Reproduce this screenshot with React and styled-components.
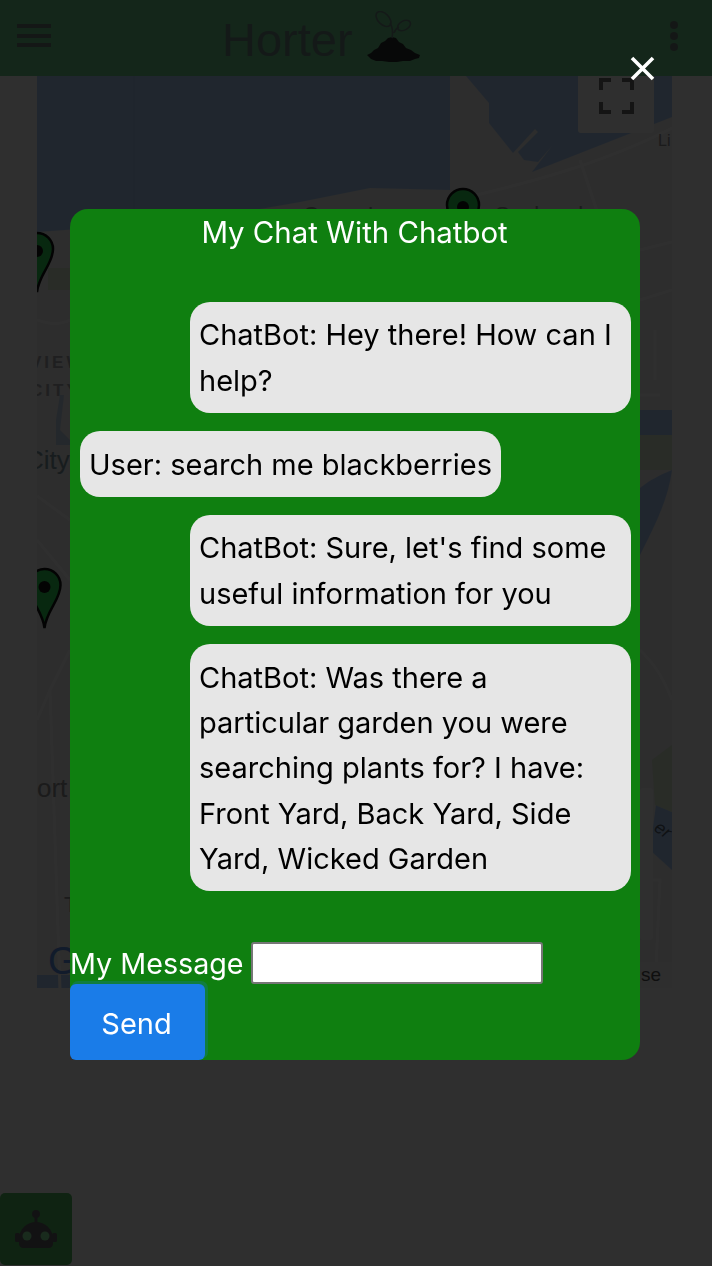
import React from 'react'
import styled, { createGlobalStyle } from 'styled-components'

const GlobalStyle = createGlobalStyle`
  html, body { margin: 0; padding: 0; background: #fff; }
  body { font-family: Inter, "Liberation Sans", sans-serif; overflow: hidden; }
  * { box-sizing: border-box; }
`

const Page = styled.div`
  width: 712px;
  height: 1266px;
  display: flex;
  flex-direction: column;
  overflow: hidden;
`

const Header = styled.header`
  height: 76px;
  flex: none;
  background: #6dce8d;
  display: flex;
  align-items: flex-start;
  padding: 0 34px 0 17px;
  position: relative;
  z-index: 1;
`

const MenuButton = styled.div`
  width: 34px;
  margin-top: 24px;
  display: flex;
  flex-direction: column;
  gap: 5.5px;
`

const MenuBar = styled.span`
  height: 4px;
  background: #6d7f78;
`

const Brand = styled.div`
  margin-left: 171px;
  display: flex;
  align-items: flex-start;
  gap: 12px;
`

const BrandName = styled.span`
  font-family: "Liberation Sans", Arial, sans-serif;
  font-size: 47px;
  line-height: 54px;
  margin-top: 13px;
  color: #6d8882;
`

const MoreButton = styled.div`
  margin-left: auto;
  margin-top: 21px;
  display: flex;
  flex-direction: column;
  gap: 3px;
`

const MoreDot = styled.span`
  width: 8px;
  height: 8px;
  border-radius: 50%;
  background: #6d7f78;
`

const MapFrame = styled.div`
  position: relative;
  width: 635px;
  height: 912px;
  margin-left: 37px;
  flex: none;
  overflow: hidden;
  background: #f0f0f0;
`

const MapDrawing = styled.svg`
  display: block;
  width: 635px;
  height: 912px;
`

const FullscreenButton = styled.div`
  position: absolute;
  top: 0;
  right: 18px;
  width: 76px;
  height: 57px;
  border-radius: 0 0 3px 3px;
  background: #fff;
`

const ChatToggle = styled.div`
  margin-top: auto;
  margin-bottom: 1px;
  width: 72px;
  height: 72px;
  background: #52be62;
  border-radius: 5px;
  display: flex;
  align-items: center;
  justify-content: center;
`

const Overlay = styled.div`
  position: fixed;
  inset: 0;
  z-index: 10;
  background: rgba(0, 0, 0, 0.816);
  padding: 209px 0 0 70px;
`

const CloseButton = styled.svg`
  position: absolute;
  top: 56px;
  left: 629px;
  width: 27px;
  height: 25px;
`

const Modal = styled.div`
  width: 570px;
  height: 851px;
  background: #0f7f10;
  border-radius: 18px;
  display: flex;
  flex-direction: column;
  color: #fff;
`

const Title = styled.div`
  font-size: 29.4px;
  line-height: 47px;
  text-align: center;
  padding-right: 1px;
`

const ChatLog = styled.div`
  margin-top: 46px;
  padding: 0 9px 0 10px;
  display: flex;
  flex-direction: column;
  gap: 18.4px;
`

const Bubble = styled.div`
  align-self: ${p => (p.$fromUser ? 'flex-start' : 'flex-end')};
  max-width: 441px;
  padding: 10.4px 9px 9.6px;
  background: #e6e6e6;
  border-radius: 20px;
  color: #000;
  font-size: 29px;
  line-height: 45.4px;
`

const MessageForm = styled.form`
  margin-top: auto;
  display: flex;
  flex-direction: column;
  align-items: flex-start;
`

const MessageRow = styled.label`
  display: flex;
  align-items: center;
  gap: 7.5px;
  height: 42px;
  font-size: 28.7px;
`

const MessageInput = styled.input`
  width: 292px;
  height: 42px;
  background: #fff;
  border: 2px solid #767676;
  border-radius: 3px;
  padding: 0 4px;
`

const SendButton = styled.button`
  width: 135px;
  height: 76px;
  border: 0;
  border-radius: 6px;
  padding: 2px 2px 0 0;
  background: #1a7ce8;
  box-shadow: 2px -2px 0 1px rgba(26, 124, 232, 0.22);
  color: #fff;
  font-family: inherit;
  font-size: 29px;
`

const messages = [
  { id: 1, text: 'ChatBot: Hey there! How can I help?' },
  { id: 2, text: 'User: search me blackberries', fromUser: true },
  { id: 3, text: "ChatBot: Sure, let's find some useful information for you" },
  { id: 4, text: 'ChatBot: Was there a particular garden you were searching plants for? I have: Front Yard, Back Yard, Side Yard, Wicked Garden' },
]

function SproutLogo() {
  return (
    <svg width="58" height="56" viewBox="0 0 58 56" style={{ marginTop: 11 }}>
      <path d="M2 44 L6 42 L9 39 L13 37 L16 32 L20 30 L23 27 L27 26 L31 27 L34 31 L38 33 L41 37 L46 39 L50 42 L55 44 L54 47 L50 48 L45 50 L38 50 L32 51 L24 51 L17 50 L11 50 L6 48Z" fill="#2a2e2e" />
      <path d="M27 27 C28 22 28 17 25 12 M29 22 C30 19 32 17 34 16" fill="none" stroke="#6d8882" strokeWidth="1.6" />
      <ellipse cx="18.5" cy="8" rx="9" ry="5.5" transform="rotate(45 18.5 8)" fill="none" stroke="#6d8882" strokeWidth="1.6" />
      <ellipse cx="39" cy="14.5" rx="7" ry="4.5" transform="rotate(-30 39 14.5)" fill="none" stroke="#6d8882" strokeWidth="1.6" />
    </svg>
  )
}

function Pin({ x, y }) {
  return (
    <g transform={`translate(${x} ${y})`}>
      <path d="M0 60 C-2 42 -16 32 -16 17 A16 16 0 0 1 16 17 C16 32 2 42 0 60Z" fill="#2bd858" stroke="#111" strokeWidth="2.5" />
      <circle cx="0" cy="19" r="6" fill="#111" />
    </g>
  )
}

function MapPicture() {
  const labelFont = '"Liberation Sans", Arial, sans-serif'
  return (
    <MapDrawing viewBox="37 76 635 912">
      {/* water */}
      <path d="M37 76 H450 V190 L370 188 L300 202 L230 214 L120 226 L37 232Z" fill="#aecffa" />
      <path d="M466 76 H672 V117 L532 172 L552 146 L538 162 L524 160 L518 152 L538 132 L535 129 L513 153 L489 123 V103Z" fill="#aecffa" />
      <path d="M640 410 H672 V435 H640Z M640 488 C650 480 660 475 672 470 C668 500 655 525 640 555Z" fill="#aecffa" />
      <path d="M656 805 L672 812 V870 L650 850Z" fill="#aecffa" />
      <path d="M56 420 L60 395 L64 395 L60 430 L70 440 V445 L56 445Z" fill="#c4d6ee" />
      <path d="M37 975 H70 V988 H37Z" fill="#aecffa" />
      {/* parks */}
      <path d="M640 435 H672 V470 H640Z M652 760 L672 745 V812 L655 805Z" fill="#dcebd0" />
      <rect x="48" y="268" width="22" height="22" fill="#dcebd0" />
      {/* roads */}
      <path d="M134 76 V226" fill="none" stroke="#a6c6f0" strokeWidth="1.5" />
      <g fill="none" stroke="#fff" strokeWidth="3">
        <path d="M455 200 C520 185 600 165 672 128" />
        <path d="M37 320 C50 325 60 325 70 320 M37 496 L70 520 M37 540 L70 580 M37 720 L50 690 L70 650 M50 690 L60 990 M640 650 C650 660 660 670 672 700" />
        <path d="M640 250 L672 242 M640 300 L672 290 M655 330 L655 380 M640 395 H660 M580 160 L600 220 M640 880 L660 880 L655 990" />
      </g>
      {/* labels */}
      <g fontFamily={labelFont} fill="#909095">
        <text x="303" y="222" fontSize="22">Camp Leroy</text>
        <text x="495" y="222" fontSize="22">Seabrook</text>
        <text x="658" y="146" fontSize="16">Li</text>
        <text x="30" y="368" fontSize="17" fontWeight="700" letterSpacing="3" fill="#a8a8ac">VIEW</text>
        <text x="30" y="396" fontSize="17" fontWeight="700" letterSpacing="3" fill="#a8a8ac">CITY</text>
        <text x="25" y="469" fontSize="26" fill="#7f9aa0">City</text>
        <text x="37" y="797" fontSize="26">ort</text>
        <text x="64" y="912" fontSize="22">T</text>
      </g>
      <text x="653" y="830" fontSize="18" fontStyle="italic" fontFamily={labelFont} fill="#55606e" transform="rotate(35 653 830)">er</text>
      <text x="48" y="974" fontSize="38" fontFamily={labelFont} fill="#5f90e8">G</text>
      {/* controls */}
      <rect x="640" y="788" width="13" height="152" rx="3" fill="#fff" />
      <rect x="640" y="962" width="32" height="26" fill="#f6f6f6" />
      <text x="641" y="981" fontSize="19" fontFamily={labelFont} fill="#555">se</text>
      <Pin x={463} y={188} />
      <Pin x={37} y={232} />
      <Pin x={44.5} y={568} />
    </MapDrawing>
  )
}

function FullscreenIcon() {
  return (
    <svg width="35" height="36" viewBox="0 0 35 36" style={{ display: 'block', margin: '2px 0 0 21px' }}>
      <path d="M2 12 V2 H12 M23 2 H33 V12 M33 24 V34 H23 M12 34 H2 V24" fill="none" stroke="#6d6d6d" strokeWidth="4" />
    </svg>
  )
}

function RobotIcon() {
  return (
    <svg width="44" height="46" viewBox="0 0 44 46">
      <circle cx="22" cy="8" r="4" fill="#626266" />
      <rect x="20.5" y="9" width="3" height="8" fill="#626266" />
      <path d="M5 33 C5 23 13 16 22 16 C31 16 39 23 39 33 V38 C39 40 37 42 35 42 H9 C7 42 5 40 5 38Z" fill="#626266" />
      <rect x="1" y="27" width="5" height="9" rx="1.5" fill="#626266" />
      <rect x="38" y="27" width="5" height="9" rx="1.5" fill="#626266" />
      <circle cx="13" cy="30" r="4.5" fill="#88e89c" />
      <circle cx="31" cy="30" r="4.5" fill="#88e89c" />
    </svg>
  )
}

function App() {
  return (
    <>
      <GlobalStyle />
      <Page>
        <Header>
          <MenuButton>
            <MenuBar />
            <MenuBar />
            <MenuBar />
          </MenuButton>
          <Brand>
            <BrandName>Horter</BrandName>
            <SproutLogo />
          </Brand>
          <MoreButton>
            <MoreDot />
            <MoreDot />
            <MoreDot />
          </MoreButton>
        </Header>
        <MapFrame>
          <MapPicture />
          <FullscreenButton>
            <FullscreenIcon />
          </FullscreenButton>
        </MapFrame>
        <ChatToggle>
          <RobotIcon />
        </ChatToggle>
      </Page>
      <Overlay>
        <CloseButton viewBox="0 0 27 25">
          <path d="M3 2 L24 23 M24 2 L3 23" stroke="#fff" strokeWidth="3.6" fill="none" />
        </CloseButton>
        <Modal>
          <Title>My Chat With Chatbot</Title>
          <ChatLog>
            {messages.map(m => (
              <Bubble key={m.id} $fromUser={m.fromUser}>{m.text}</Bubble>
            ))}
          </ChatLog>
          <MessageForm onSubmit={e => e.preventDefault()}>
            <MessageRow>
              My Message
              <MessageInput type="text" />
            </MessageRow>
            <SendButton type="submit">Send</SendButton>
          </MessageForm>
        </Modal>
      </Overlay>
    </>
  )
}

export default App
